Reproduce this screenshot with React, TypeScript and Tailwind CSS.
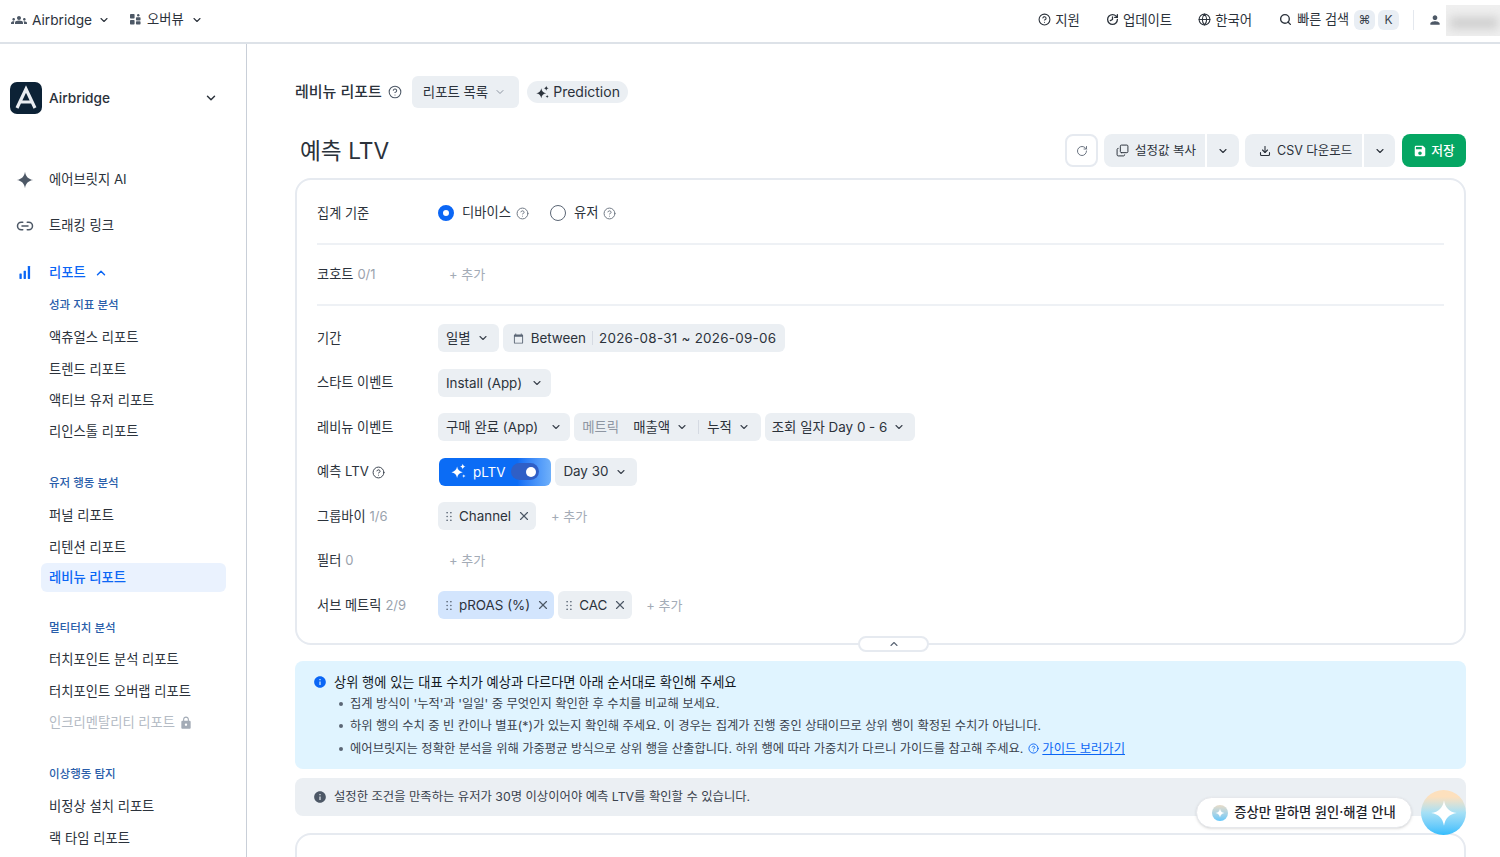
import type { ReactNode } from 'react'
import { ChevronDown, ChevronUp, CircleHelp, Copy, Download, Globe, History, Link2, RotateCw, Search, X } from 'lucide-react'
import { MdCalendarToday, MdGroups, MdInfo, MdLock, MdPerson, MdSave } from 'react-icons/md'

const FONT = 'font-["Inter","Noto_Sans_CJK_KR",sans-serif]'

function Star({ className, fill = 'currentColor' }: { className?: string; fill?: string }) {
  return (
    <svg viewBox="0 0 24 24" className={className}>
      <path fill={fill} d="M12 1c1 6.500 4.500 10 11 11-6.500 1-10 4.500-11 11-1-6.500-4.500-10-11-11 6.500-1 10-4.500 11-11z" />
    </svg>
  )
}

function Sparkles({ className }: { className?: string }) {
  return (
    <svg viewBox="0 0 24 24" fill="currentColor" className={className}>
      <path d="M10 5c.8 4.600 3.400 7.200 8 8-4.600.8-7.200 3.400-8 8-.8-4.600-3.400-7.200-8-8 4.600-.8 7.200-3.400 8-8z" />
      <path d="M18 1c.4 2.300 1.700 3.600 4 4-2.300.4-3.600 1.700-4 4-.4-2.300-1.700-3.600-4-4 2.300-.4 3.600-1.700 4-4z" />
      <path d="M19.500 16c.3 1.500 1 2.200 2.500 2.500-1.500.3-2.200 1-2.500 2.500-.3-1.500-1-2.200-2.500-2.500 1.500-.3 2.200-1 2.500-2.500z" />
    </svg>
  )
}

function Grip() {
  return (
    <svg viewBox="0 0 8 12" className="h-[9px] w-[6px] shrink-0 text-[#5b6675]" fill="currentColor">
      {[1, 6, 11].map((y) => (
        <g key={y}>
          <circle cx="1.500" cy={y} r="1.100" />
          <circle cx="6.500" cy={y} r="1.100" />
        </g>
      ))}
    </svg>
  )
}

function OverviewIcon() {
  return (
    <svg viewBox="0 0 12 12" className="h-[11px] w-[11px]" fill="#4d5866">
      <rect x="0" y="0" width="5" height="5" rx="0.800" />
      <rect x="0" y="6.500" width="5" height="5" rx="0.800" />
      <rect x="6.500" y="3.500" width="5" height="3.500" rx="0.800" />
      <rect x="6.500" y="8" width="5" height="3.500" rx="0.800" />
      <circle cx="9" cy="1.300" r="1.300" />
    </svg>
  )
}

function TopItem({ icon, label }: { icon: ReactNode; label: string }) {
  return (
    <div className="flex items-center gap-[4px] text-[13.400px] text-[#2b323b]">
      {icon}
      <span>{label}</span>
    </div>
  )
}

function Kbd({ children }: { children: ReactNode }) {
  return (
    <span className="flex h-5 w-[21px] items-center justify-center rounded-md bg-[#e9eef4] text-xs text-[#3a424d]">
      {children}
    </span>
  )
}

function TopBar() {
  return (
    <header className="flex h-[44px] shrink-0 items-center justify-between border-b-2 border-[#dde2e8] bg-white pb-[2px] pl-[11px]">
      <div className="flex items-center">
        <div className="flex items-center text-[13.700px] text-[#2b323b]">
          <MdGroups className="mr-[5px] h-4 w-4 text-[#4d5866]" />
          <span>Airbridge</span>
          <ChevronDown className="ml-[6px] h-3 w-3" strokeWidth={2.200} />
        </div>
        <div className="ml-[20px] flex items-center text-[13.300px] text-[#2b323b]">
          <OverviewIcon />
          <span className="ml-[6px]">오버뷰</span>
          <ChevronDown className="ml-[7px] h-3 w-3" strokeWidth={2.200} />
        </div>
      </div>
      <div className="flex items-center">
        <div className="flex items-center gap-[26px]">
          <TopItem icon={<CircleHelp className="h-[13px] w-[13px]" strokeWidth={2} />} label="지원" />
          <TopItem icon={<History className="h-[13px] w-[13px] -scale-x-100" strokeWidth={2.400} />} label="업데이트" />
          <TopItem icon={<Globe className="h-[13px] w-[13px]" strokeWidth={2} />} label="한국어" />
          <div className="ml-px flex items-center text-[13.100px] text-[#2b323b]">
            <Search className="mr-[5px] h-[13px] w-[13px]" strokeWidth={2.500} />
            <span className="mr-[5px]">빠른 검색</span>
            <span className="flex gap-[3px]">
              <Kbd>⌘</Kbd>
              <Kbd>K</Kbd>
            </span>
          </div>
        </div>
        <div className="ml-[14px] mr-[14px] h-5 w-px bg-[#e4e8ee]" />
        <MdPerson className="h-3.5 w-3.5 text-[#4d5866]" />
        <div className="ml-[4px] h-[31px] w-[54px] self-start overflow-hidden bg-[#efefef]">
          <div className="ml-1 mt-3 h-3 w-[48px] bg-[#cfcfcf] blur-[5px]" />
        </div>
      </div>
    </header>
  )
}

function SideTitle({ children, first }: { children: ReactNode; first?: boolean }) {
  return (
    <div className={`${first ? 'mt-[5px]' : 'mt-[24px]'} mb-[4.500px] flex h-6 items-center pl-[49px] text-[11.500px] font-medium text-[#2a5eaa]`}>
      {children}
    </div>
  )
}

function SideItem({ children }: { children: ReactNode }) {
  return <div className="flex h-[31.400px] items-center pl-[49px] text-[13.300px] text-[#2b323b]">{children}</div>
}

function SideMain({ icon, children, active }: { icon: ReactNode; children: ReactNode; active?: boolean }) {
  return (
    <div className={`flex h-[46.300px] items-center text-[13.300px] ${active ? 'font-medium text-[#0b66f5]' : 'text-[#2b323b]'}`}>
      <span className="flex w-[49px] justify-center">{icon}</span>
      {children}
    </div>
  )
}

function Sidebar() {
  return (
    <aside className="w-[247px] shrink-0 border-r border-[#c9cfd8] bg-white">
      <div className="mt-[38px] flex items-center pl-[10px] pr-[28px]">
        <svg viewBox="0 0 32 32" className="h-8 w-8 shrink-0">
          <rect width="32" height="32" rx="7" fill="#0c2236" />
          <path d="M7 26 16 7l9 19M10.500 20h11" fill="none" stroke="#e9edf2" strokeWidth="3.200" />
        </svg>
        <span className="ml-[7px] flex-1 text-[13.700px] font-medium text-[#2b323b]">Airbridge</span>
        <ChevronDown className="h-3.5 w-3.5 text-[#2b323b]" strokeWidth={2.500} />
      </div>
      <nav className="mt-[43px]">
        <SideMain icon={<Star className="h-[18px] w-[18px] text-[#4d5866]" />}>에어브릿지 AI</SideMain>
        <SideMain icon={<Link2 className="h-[18px] w-[18px] text-[#4d5866]" strokeWidth={2} />}>트래킹 링크</SideMain>
        <SideMain
          active
          icon={
            <svg viewBox="0 0 12 14" className="h-[13px] w-[12px]" fill="#0b66f5">
              <rect x="0" y="8" width="2.500" height="6" rx="0.500" />
              <rect x="4.500" y="5" width="2.500" height="9" rx="0.500" />
              <rect x="9" y="0" width="2.500" height="14" rx="0.500" />
            </svg>
          }
        >
          <span>리포트</span>
          <ChevronUp className="ml-[8px] h-3.5 w-3.5" strokeWidth={2.500} />
        </SideMain>
        <div className="-mt-[7px]">
          <SideTitle first>성과 지표 분석</SideTitle>
          <SideItem>액츄얼스 리포트</SideItem>
          <SideItem>트렌드 리포트</SideItem>
          <SideItem>액티브 유저 리포트</SideItem>
          <SideItem>리인스톨 리포트</SideItem>
          <SideTitle>유저 행동 분석</SideTitle>
          <SideItem>퍼널 리포트</SideItem>
          <SideItem>리텐션 리포트</SideItem>
          <div className="mb-1 ml-[41px] mr-5 flex h-[29px] items-center rounded-md bg-[#eaf2fe] pl-2 pt-px text-[13.300px] font-medium text-[#0b66f5]">
            레비뉴 리포트
          </div>
          <SideTitle>멀티터치 분석</SideTitle>
          <SideItem>터치포인트 분석 리포트</SideItem>
          <SideItem>터치포인트 오버랩 리포트</SideItem>
          <SideItem>
            <span className="text-[#b4bbc4]">인크리멘탈리티 리포트</span>
            <MdLock className="ml-[4px] h-3.5 w-3.5 text-[#a3abb6]" />
          </SideItem>
          <SideTitle>이상행동 탐지</SideTitle>
          <SideItem>비정상 설치 리포트</SideItem>
          <SideItem>랙 타임 리포트</SideItem>
        </div>
      </nav>
    </aside>
  )
}

function Chip({ children, className = '', blue }: { children: ReactNode; className?: string; blue?: boolean }) {
  return (
    <div className={`flex h-7 items-center rounded-md px-2 text-[13.400px] text-[#2b323b] ${blue ? 'bg-[#d3e5fd]' : 'bg-[#ebeff3]'} ${className}`}>
      {children}
    </div>
  )
}

function Caret({ className = 'ml-[9px]' }: { className?: string }) {
  return <ChevronDown className={`h-3 w-3 text-[#3a424d] ${className}`} strokeWidth={2.200} />
}

function Add({ className = '' }: { className?: string }) {
  return <span className={`text-[13px] text-[#a3abb6] ${className}`}>+ 추가</span>
}

function Help({ className = 'text-[#6d7683]' }: { className?: string }) {
  return <CircleHelp className={`h-[13px] w-[13px] ${className}`} strokeWidth={1.800} />
}

function Row({ label, count, children }: { label: ReactNode; count?: string; children: ReactNode }) {
  return (
    <div className="flex h-[44.500px] items-center">
      <div className="flex w-[121px] shrink-0 items-center pt-px text-[13.200px] text-[#2b323b]">
        {label}
        {count && <span className="ml-1 text-[13px] text-[#9aa2ad]">{count}</span>}
      </div>
      <div className="flex items-center gap-1">{children}</div>
    </div>
  )
}

function Tag({ label, blue }: { label: string; blue?: boolean }) {
  return (
    <Chip blue={blue} className={blue ? 'pr-[4px]' : 'pr-[5px]'}>
      <Grip />
      <span className="ml-[7px]">{label}</span>
      <X className="ml-[6px] h-3.5 w-3.5 text-[#4d5866]" strokeWidth={2} />
    </Chip>
  )
}

function SplitButton({ icon, label, labelWidth, caretWidth }: { icon: ReactNode; label: string; labelWidth: string; caretWidth: string }) {
  return (
    <div className="flex h-[33px] items-center overflow-hidden rounded-lg text-[12.500px] text-[#2b323b]">
      <div className={`flex h-full items-center gap-[6px] bg-[#ebeff3] pl-3 ${labelWidth}`}>
        {icon}
        <span className="pt-px">{label}</span>
      </div>
      <div className={`ml-[2px] flex h-full items-center justify-center bg-[#ebeff3] ${caretWidth}`}>
        <ChevronDown className="h-3 w-3" strokeWidth={2.200} />
      </div>
    </div>
  )
}

function FilterCard() {
  return (
    <section className="relative mt-[11px] rounded-2xl border-2 border-[#e6eaf0] bg-white px-5">
      <div className="flex h-[65px] items-center border-b-2 border-[#eef1f5] pt-[3px]">
        <div className="w-[121px] pt-px text-[13.200px] text-[#2b323b]">집계 기준</div>
        <div className="flex items-center text-[13.300px] text-[#2b323b]">
          <span className="h-4 w-4 rounded-full border-[5px] border-[#0b66f5] bg-white" />
          <span className="ml-2">디바이스</span>
          <Help className="ml-[5px] text-[#6d7683]" />
          <span className="ml-[21px] h-4 w-4 rounded-full border border-[#5b6675] bg-white" />
          <span className="ml-2">유저</span>
          <Help className="ml-[5px] text-[#6d7683]" />
        </div>
      </div>
      <div className="flex h-[61px] items-center border-b-2 border-[#eef1f5]">
        <div className="flex w-[121px] items-center text-[13.200px] text-[#2b323b]">
          코호트<span className="ml-1 text-[13px] text-[#9aa2ad]">0/1</span>
        </div>
        <Add className="ml-[11px]" />
      </div>
      <div className="pb-[15px] pt-[10px]">
        <Row label="기간">
          <Chip className="pr-[10px]">
            일별
            <Caret className="ml-[6px]" />
          </Chip>
          <Chip className="pr-[9px]">
            <MdCalendarToday className="ml-[2px] h-[11px] w-[11px] text-[#5b6675]" />
            <span className="ml-[7px]">Between</span>
            <span className="mx-[6px] h-3.5 w-px bg-[#d5dae2]" />
            <span className="tracking-[0.27px]">2026-08-31 ~ 2026-09-06</span>
          </Chip>
        </Row>
        <Row label="스타트 이벤트">
          <Chip>
            Install (App)
            <Caret />
          </Chip>
        </Row>
        <Row label="레비뉴 이벤트">
          <Chip>
            구매 완료 (App)
            <Caret className="ml-[12px]" />
          </Chip>
          <Chip className="pr-[11px]">
            <span className="text-[#8e96a2]">메트릭</span>
            <span className="ml-[14px]">매출액</span>
            <Caret className="ml-[6px]" />
            <span className="ml-[10px] mr-[8px] h-3.5 w-px bg-[#d5dae2]" />
            누적
            <Caret className="ml-[6px]" />
          </Chip>
          <Chip className="pl-[7px] pr-[10px]">
            조회 일자 Day 0 - 6
            <Caret className="ml-[6px]" />
          </Chip>
        </Row>
        <Row
          label={
            <>
              예측 LTV
              <Help className="ml-[3px] text-[#3a424d]" />
            </>
          }
        >
          <div className="ml-px flex h-7 items-center rounded-md bg-gradient-to-r from-[#0b6cf5] from-70% to-[#6fb0fa] pl-[11px] pr-[12px] text-[13.400px] text-white">
            <Sparkles className="h-[17px] w-[17px]" />
            <span className="ml-[6px]">pLTV</span>
            <span className="ml-[6px] flex h-[17px] w-[28px] items-center justify-end rounded-full bg-[#2f5fc6] pr-[3px]">
              <span className="h-[10px] w-[10px] rounded-full bg-white" />
            </span>
          </div>
          <Chip className="pr-[10px] text-sm">
            Day 30
            <Caret className="ml-[7px]" />
          </Chip>
        </Row>
        <Row label="그룹바이" count="1/6">
          <Tag label="Channel" />
          <Add className="ml-[11px]" />
        </Row>
        <Row label="필터" count="0">
          <Add className="ml-[11px]" />
        </Row>
        <Row label="서브 메트릭" count="2/9">
          <Tag label="pROAS (%)" blue />
          <Tag label="CAC" />
          <Add className="ml-[10px]" />
        </Row>
      </div>
      <div className="absolute -bottom-[9px] left-[561px] flex h-4 w-[71px] items-center justify-center rounded-full border-2 border-[#e6eaf0] bg-white">
        <ChevronUp className="h-3 w-3 text-[#5b6675]" strokeWidth={2.200} />
      </div>
    </section>
  )
}

function Bullet() {
  return <span className="mr-[6px] h-1 w-1 -translate-x-px rounded-full bg-[#5b6675]" />
}

function Notice() {
  const lines = [
    "집계 방식이 '누적'과 '일일' 중 무엇인지 확인한 후 수치를 비교해 보세요.",
    '하위 행의 수치 중 빈 칸이나 별표(*)가 있는지 확인해 주세요. 이 경우는 집계가 진행 중인 상태이므로 상위 행이 확정된 수치가 아닙니다.',
  ]
  return (
    <div className="mt-[16px] h-[108px] rounded-lg bg-[#e0f4ff] pl-[18px] pt-[12px]">
      <div className="flex items-center text-[13.240px] leading-[18px] text-[#14191f]">
        <MdInfo className="mr-[7px] h-3.5 w-3.5 text-[#0b66f5]" />
        상위 행에 있는 대표 수치가 예상과 다르다면 아래 순서대로 확인해 주세요
      </div>
      <ul className="mt-[2px] pl-[27px] text-[12.300px] leading-[22.500px] text-[#3a424d]">
        {lines.map((l) => (
          <li key={l} className="flex items-center">
            <Bullet />
            {l}
          </li>
        ))}
        <li className="flex items-center">
          <Bullet />
          에어브릿지는 정확한 분석을 위해 가중평균 방식으로 상위 행을 산출합니다. 하위 행에 따라 가중치가 다르니 가이드를 참고해 주세요.
          <CircleHelp className="ml-[5px] h-[11px] w-[11px] text-[#0b66f5]" strokeWidth={2} />
          <span className="ml-[3px] text-[#0b66f5] underline">가이드 보러가기</span>
        </li>
      </ul>
    </div>
  )
}

export default function App() {
  return (
    <div className={`flex h-[857px] flex-col overflow-hidden bg-white ${FONT}`}>
      <TopBar />
      <div className="flex min-h-0 flex-1">
        <Sidebar />
        <main className="relative min-w-0 flex-1 pl-[48px] pr-[34px]">
          <div className="mt-[32px] flex h-8 items-center">
            <span className="text-[15px] font-medium text-[#2b323b]">레비뉴 리포트</span>
            <CircleHelp className="ml-[6px] h-[14px] w-[14px] text-[#4d5866]" strokeWidth={1.800} />
            <div className="ml-[10px] flex h-8 items-center rounded-md bg-[#ebeff3] pl-[11px] pr-[13px] text-[13.400px] text-[#2b323b]">
              리포트 목록
              <ChevronDown className="ml-[6px] h-3 w-3 text-[#8e96a2]" strokeWidth={2} />
            </div>
            <div className="ml-2 flex h-[22px] items-center rounded-full bg-[#ebeff3] pl-[8px] pr-[8px] text-sm text-[#2b323b]">
              <Sparkles className="mr-[3px] h-[15px] w-[15px]" />
              Prediction
            </div>
          </div>
          <div className="mt-[26px] flex h-[33px] items-center justify-between">
            <h1 className="pl-[5px] pt-px text-[22.700px] font-normal text-[#2b323b]">예측 LTV</h1>
            <div className="flex items-center">
              <div className="mr-[6px] flex h-[33px] w-[33px] items-center justify-center rounded-lg border-2 border-[#e6eaf0]">
                <RotateCw className="h-3 w-3 text-[#6d7683]" strokeWidth={2} />
              </div>
              <SplitButton
                icon={<Copy className="h-[13px] w-[13px] -scale-y-100" strokeWidth={1.800} />}
                label="설정값 복사"
                labelWidth="w-[101px]"
                caretWidth="w-[32px]"
              />
              <div className="w-[6px]" />
              <SplitButton
                icon={<Download className="ml-[2px] h-3 w-3" strokeWidth={2.200} />}
                label="CSV 다운로드"
                labelWidth="w-[117px]"
                caretWidth="w-[31px]"
              />
              <div className="ml-[7px] flex h-[33px] w-[64px] items-center justify-center gap-1 rounded-lg bg-[#05a663] text-[12.800px] font-medium text-white">
                <MdSave className="h-3.5 w-3.5" />
                저장
              </div>
            </div>
          </div>
          <FilterCard />
          <Notice />
          <div className="mt-[9px] flex h-[38px] items-center rounded-lg bg-[#ebeff3] pl-[18px] pt-px text-[12.330px] text-[#3a424d]">
            <MdInfo className="mr-[7px] h-3.5 w-3.5 text-[#4d5866]" />
            설정한 조건을 만족하는 유저가 30명 이상이어야 예측 LTV를 확인할 수 있습니다.
          </div>
          <div className="mt-[17px] h-[60px] rounded-2xl border-2 border-[#e6eaf0] bg-white" />
          <div className="absolute right-[88px] top-[753px] flex h-[31px] w-[216px] items-center justify-center rounded-full border border-[#e6e8ec] bg-white text-[13.300px] font-medium text-[#1f252c] shadow-sm">
            <span className="mr-[6px] flex h-4 w-4 items-center justify-center rounded-full bg-gradient-to-b from-[#e8dcc8] to-[#63c8fb]">
              <Star className="h-2.5 w-2.5 text-white" />
            </span>
            증상만 말하면 원인·해결 안내
          </div>
          <div className="absolute right-[34px] top-[746px] flex h-[45px] w-[45px] items-center justify-center rounded-full bg-gradient-to-b from-[#fde0bd] from-15% via-[#a6e0f5] via-50% to-[#30bdfd]">
            <Star className="h-7 w-7 text-white" />
          </div>
        </main>
      </div>
    </div>
  )
}
